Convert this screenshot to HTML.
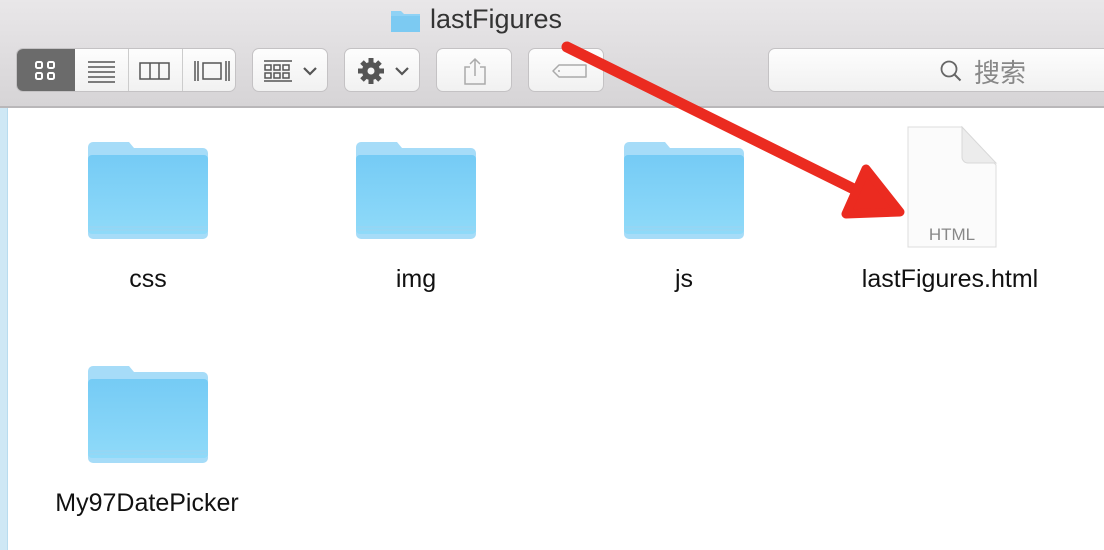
<!DOCTYPE html>
<html><head><style>
*{margin:0;padding:0;box-sizing:border-box}
body{width:1104px;height:550px;overflow:hidden;background:#fff;font-family:"Liberation Sans","Noto Sans CJK SC",sans-serif;position:relative}
.tb{position:absolute;left:0;top:0;width:1104px;height:108px;background:linear-gradient(#e9e7e9,#d6d4d6);border-bottom:2px solid #b9b7b9}
.btn{position:absolute;top:48px;height:44px;background:linear-gradient(#fdfdfd,#f1f1f1);border:1px solid #c4c2c4;border-radius:7px}
.lbl{position:absolute;font-size:25px;color:#111;text-align:center;width:260px}
.strip{position:absolute;left:0;top:108px;width:8px;height:442px;background:#cfe8f5;border-right:1px solid #b8dcef}
</style></head><body>
<div class="tb">
 <svg style="position:absolute;left:390px;top:8px" width="32" height="26"><path d="M1 3h10l3 3h16v18H1z" fill="#8fd2f5"/><rect x="1" y="8" width="29" height="16" fill="#7ccaf2"/></svg>
 <div style="position:absolute;left:430px;top:4px;font-size:27px;color:#333">lastFigures</div>
 <div class="btn" style="left:16px;width:220px;overflow:hidden">
  <div style="position:absolute;left:0;top:0;width:58px;height:44px;background:#6b6b6b"></div>
  <div style="position:absolute;left:111px;top:0;width:1px;height:44px;background:#ccc"></div>
  <div style="position:absolute;left:165px;top:0;width:1px;height:44px;background:#ccc"></div>
  <svg style="position:absolute;left:0;top:0" width="220" height="44">
   <g fill="none" stroke="#fff" stroke-width="2"><rect x="19" y="13" width="6" height="6" rx="1.5"/><rect x="31" y="13" width="6" height="6" rx="1.5"/><rect x="19" y="24" width="6" height="6" rx="1.5"/><rect x="31" y="24" width="6" height="6" rx="1.5"/></g>
   <g stroke="#555" stroke-width="1.5" fill="none"><path d="M71 13h27M71 18h27M71 23h27M71 28h27M71 33h27"/>
   <rect x="123" y="14" width="29" height="16"/><path d="M133 14v16M142 14v16"/>
   <path d="M178 12v20M181 12v20M209 12v20M212 12v20"/><rect x="186" y="14" width="18" height="16"/></g>
  </svg>
 </div>
 <div class="btn" style="left:252px;width:76px"><svg width="76" height="44"><g stroke="#555" stroke-width="1.5" fill="none"><path d="M11 12h28M11 32h28"/><rect x="12" y="16" width="6" height="5"/><rect x="21" y="16" width="6" height="5"/><rect x="30" y="16" width="6" height="5"/><rect x="12" y="24" width="6" height="5"/><rect x="21" y="24" width="6" height="5"/><rect x="30" y="24" width="6" height="5"/><path d="M51 19l6 6 6-6" stroke-width="2.2"/></g></svg></div>
 <div class="btn" style="left:344px;width:76px"><svg width="76" height="44"><g transform="translate(26,22)"><circle r="9" fill="#555"/><g stroke="#555" stroke-width="5"><path d="M0-13V13M-13 0H13M-9-9L9 9M9-9L-9 9"/></g><circle r="3.5" fill="#f5f5f5"/></g><path d="M51 19l6 6 6-6" stroke="#555" stroke-width="2.2" fill="none"/></svg></div>
 <div class="btn" style="left:436px;width:76px"><svg width="76" height="44"><g stroke="#aaa" stroke-width="1.5" fill="none"><path d="M33 18h-5v17h20V18h-5M38 27V10M33 15l5-5 5 5"/></g></svg></div>
 <div class="btn" style="left:528px;width:76px"><svg width="76" height="44"><path d="M30 16h27v12H30l-6-6z" stroke="#aaa" stroke-width="1.5" fill="none" stroke-linejoin="round"/><circle cx="30" cy="22" r="1" fill="#aaa"/></svg></div>
 <div class="btn" style="left:768px;width:345px"><svg style="position:absolute;left:170px;top:10px" width="24" height="24"><circle cx="10" cy="10" r="7.5" stroke="#666" stroke-width="1.8" fill="none"/><path d="M15.5 15.5l6 6" stroke="#666" stroke-width="2"/></svg><div style="position:absolute;left:205px;top:4px;font-size:26px;color:#888">搜索</div></div>
</div>
<div class="strip"></div>
<svg style="position:absolute;left:0;top:0" width="1104" height="550">
 <defs><g id="f"><path d="M0 6a5 5 0 0 1 5-5h36l5 6h69a5 5 0 0 1 5 5v81a5 5 0 0 1-5 5H5a5 5 0 0 1-5-5z" fill="#a6dcf8"/><rect x="0" y="14" width="120" height="79" rx="4" fill="url(#g)"/><path d="M1 86h118M1 89h118" stroke="#9dd4f0" stroke-width="1"/></g>
 <linearGradient id="g" x1="0" y1="0" x2="0" y2="1"><stop offset="0" stop-color="#75cbf5"/><stop offset="1" stop-color="#8fdaf9"/></linearGradient></defs>
 <use href="#f" x="88" y="141"/><use href="#f" x="356" y="141"/><use href="#f" x="624" y="141"/><use href="#f" x="88" y="365"/>
 <path d="M908 127h54l34 38v82h-88z" fill="#fbfbfb" stroke="#ddd"/><path d="M962 127v30a6 6 0 0 0 6 6h28z" fill="#ececec" stroke="#d8d8d8"/>
 <text x="952" y="240" font-size="17" fill="#888" text-anchor="middle" font-family="Liberation Sans">HTML</text>
 <g fill="#eb2b20" stroke="#eb2b20" stroke-linecap="round" stroke-linejoin="round"><path d="M567 47L880 202" stroke-width="11"/><path d="M846 214L900 212L866 169Z" stroke-width="9"/></g>
</svg>
<div class="lbl" style="left:18px;top:265px">css</div>
<div class="lbl" style="left:286px;top:265px">img</div>
<div class="lbl" style="left:554px;top:265px">js</div>
<div class="lbl" style="left:820px;top:265px">lastFigures.html</div>
<div class="lbl" style="left:17px;top:489px">My97DatePicker</div>
</body></html>
